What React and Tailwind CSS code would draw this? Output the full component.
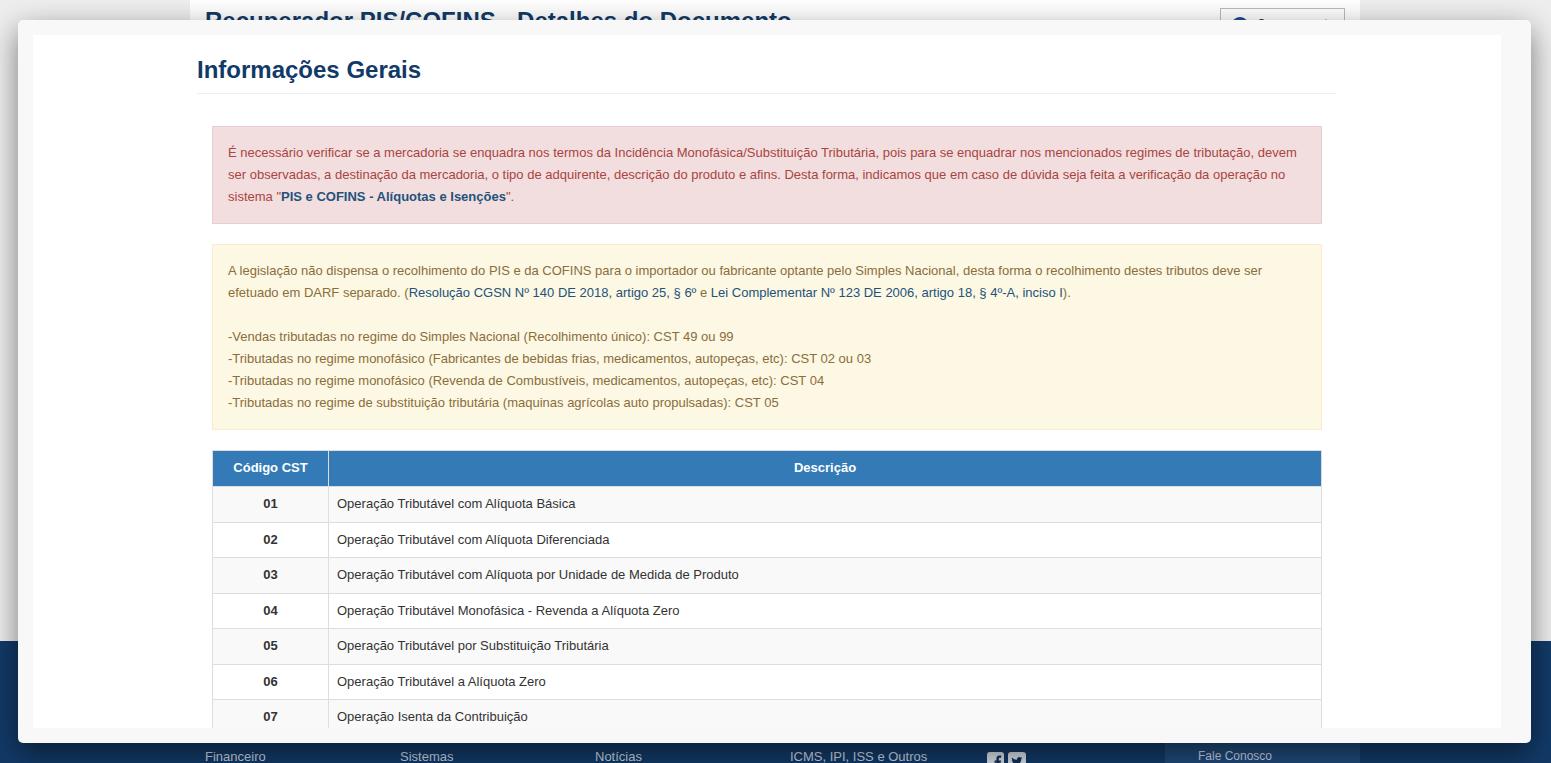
import React from "react";

const font = "font-['Liberation_Sans',Arial,sans-serif]";

const rows = [
  ["01", "Operação Tributável com Alíquota Básica"],
  ["02", "Operação Tributável com Alíquota Diferenciada"],
  ["03", "Operação Tributável com Alíquota por Unidade de Medida de Produto"],
  ["04", "Operação Tributável Monofásica - Revenda a Alíquota Zero"],
  ["05", "Operação Tributável por Substituição Tributária"],
  ["06", "Operação Tributável a Alíquota Zero"],
  ["07", "Operação Isenta da Contribuição"],
  ["08", "Operação Sem Incidência da Contribuição"],
];

const Background = () => (
  <div className="h-[763px] overflow-hidden flex flex-col bg-[#eeeeee]">
    <div className="h-[641px] shrink-0 w-[1170px] ml-[190px] bg-white px-[15px] pt-[3px]">
      <div className="flex justify-between items-start">
        <h1 className="text-[24px] leading-[36px] font-bold text-[#123a68]">
          Recuperador PIS/COFINS - Detalhes do Documento
        </h1>
        <div className="w-[125px] h-[34px] mt-[5px] border border-[#bbb] flex items-center pl-[11px] gap-[9px] text-[#123a68] font-bold text-[12px]">
          <span className="w-[16px] h-[16px] rounded-full bg-[#1d4f91]" />
          <span className="pb-[2px]">Comprovante</span>
        </div>
      </div>
    </div>
    <div className="h-[122px] shrink-0 overflow-hidden bg-[#123a68]">
      <div className="w-[1170px] ml-[190px] h-full flex text-[13px] text-[#c8d4e0]">
        <span className="w-[195px] pl-[15px] pt-[106px]">Financeiro</span>
        <span className="w-[195px] pl-[15px] pt-[106px]">Sistemas</span>
        <span className="w-[195px] pl-[15px] pt-[106px]">Notícias</span>
        <span className="w-[195px] pl-[15px] pt-[106px]">ICMS, IPI, ISS e Outros</span>
        <span className="flex gap-[4px] w-[195px] pl-[17px] pt-[111px]">
          <svg width="17" height="17" viewBox="0 0 18 18">
            <rect width="18" height="18" rx="3" fill="#d5dde6" />
            <path d="M12.500 18v-6.500h2l.4-2.600h-2.400V7.400c0-.8.3-1.300 1.300-1.300h1.200V3.800c-.5-.1-1.200-.1-1.800-.1-2 0-3.200 1.200-3.200 3.300v1.900H8v2.600h2.200V18z" fill="#12305a" />
          </svg>
          <svg width="18" height="18" viewBox="0 0 18 18">
            <rect width="18" height="18" rx="3" fill="#d5dde6" />
            <path d="M14.500 6c-.4.2-.8.3-1.200.4.400-.3.800-.7.900-1.200-.4.200-.9.400-1.400.5a2.200 2.200 0 0 0-3.700 2C6.800 7.600 5.200 6.800 4.100 5.400c-.6 1-.3 2.300.7 2.900-.4 0-.7-.1-1-.3 0 1.100.8 2 1.800 2.200-.3.100-.7.100-1 0 .3.900 1.100 1.500 2.100 1.500-.9.700-2.100 1.100-3.300 1 1 .6 2.200 1 3.400 1 4.100 0 6.500-3.500 6.400-6.700.5-.3.900-.6 1.300-1z" fill="#12305a" />
          </svg>
        </span>
        <div className="w-[195px] h-full bg-[#1f4a7a] pl-[33px] pt-[107px] text-[12px] leading-[16px]">Fale Conosco</div>
      </div>
    </div>
  </div>
);

const App = () => (
  <div className={`${font} relative h-[763px] overflow-hidden`}>
    <Background />
    {/* modal */}
    <div className="absolute left-[18px] top-[20px] w-[1513px] h-[723px] rounded-[5px] bg-[#f8f8f8] pl-[15px] pr-[30px] py-[15px] shadow-[0_10px_30px_rgba(0,0,0,0.5)]">
      <div className="h-[693px] bg-white overflow-hidden pl-[164px] pt-[15px]">
        <div className="w-[1139px]">
          <h2 className="text-[24px] leading-[40px] font-bold text-[#123a68] border-b border-[#eee] h-[44px]">
            Informações Gerais
          </h2>
          <div className="pl-[15px] pr-[14px] pt-[32px]">
            <div className="border border-[#ebccd1] bg-[#f2dede] text-[#a94442] text-[13px] leading-[22px] p-[15px] mb-[20px]">
              É necessário verificar se a mercadoria se enquadra nos termos da Incidência Monofásica/Substituição Tributária, pois para se enquadrar nos mencionados regimes de tributação, devem ser observadas, a destinação da mercadoria, o tipo de adquirente, descrição do produto e afins. Desta forma, indicamos que em caso de dúvida seja feita a verificação da operação no sistema "<b className="text-[#23527c]">PIS e COFINS - Alíquotas e Isenções</b>".
            </div>
            <div className="border border-[#faebcc] bg-[#fcf8e3] text-[#8a6d3b] text-[13px] leading-[22px] p-[15px] mb-[20px]">
              A legislação não dispensa o recolhimento do PIS e da COFINS para o importador ou fabricante optante pelo Simples Nacional, desta forma o recolhimento destes tributos deve ser efetuado em DARF separado. (<span className="text-[#23527c]">Resolução CGSN Nº 140 DE 2018, artigo 25, § 6º</span> e <span className="text-[#23527c]">Lei Complementar Nº 123 DE 2006, artigo 18, § 4º-A, inciso I</span>).
              <br /><br />
              -Vendas tributadas no regime do Simples Nacional (Recolhimento único): CST 49 ou 99
              <br />
              -Tributadas no regime monofásico (Fabricantes de bebidas frias, medicamentos, autopeças, etc): CST 02 ou 03
              <br />
              -Tributadas no regime monofásico (Revenda de Combustíveis, medicamentos, autopeças, etc): CST 04
              <br />
              -Tributadas no regime de substituição tributária (maquinas agrícolas auto propulsadas): CST 05
            </div>
            <table className="w-full border-collapse text-[13px] text-[#333] table-fixed">
              <thead>
                <tr className="bg-[#337ab7] text-white h-[36px]">
                  <th className="w-[116px] border border-[#ddd] font-bold pb-[1px]">Código CST</th>
                  <th className="border border-[#ddd] font-bold pb-[1px]">Descrição</th>
                </tr>
              </thead>
              <tbody>
                {rows.map(([code, desc], i) => (
                  <tr key={code} className={`h-[35.500px] ${i % 2 === 0 ? "bg-[#f9f9f9]" : "bg-white"}`}>
                    <td className="border border-[#ddd] text-center font-bold pb-[1px]">{code}</td>
                    <td className="border border-[#ddd] px-[8px] pb-[1px]">{desc}</td>
                  </tr>
                ))}
              </tbody>
            </table>
          </div>
        </div>
      </div>
    </div>
  </div>
);

export default App;
